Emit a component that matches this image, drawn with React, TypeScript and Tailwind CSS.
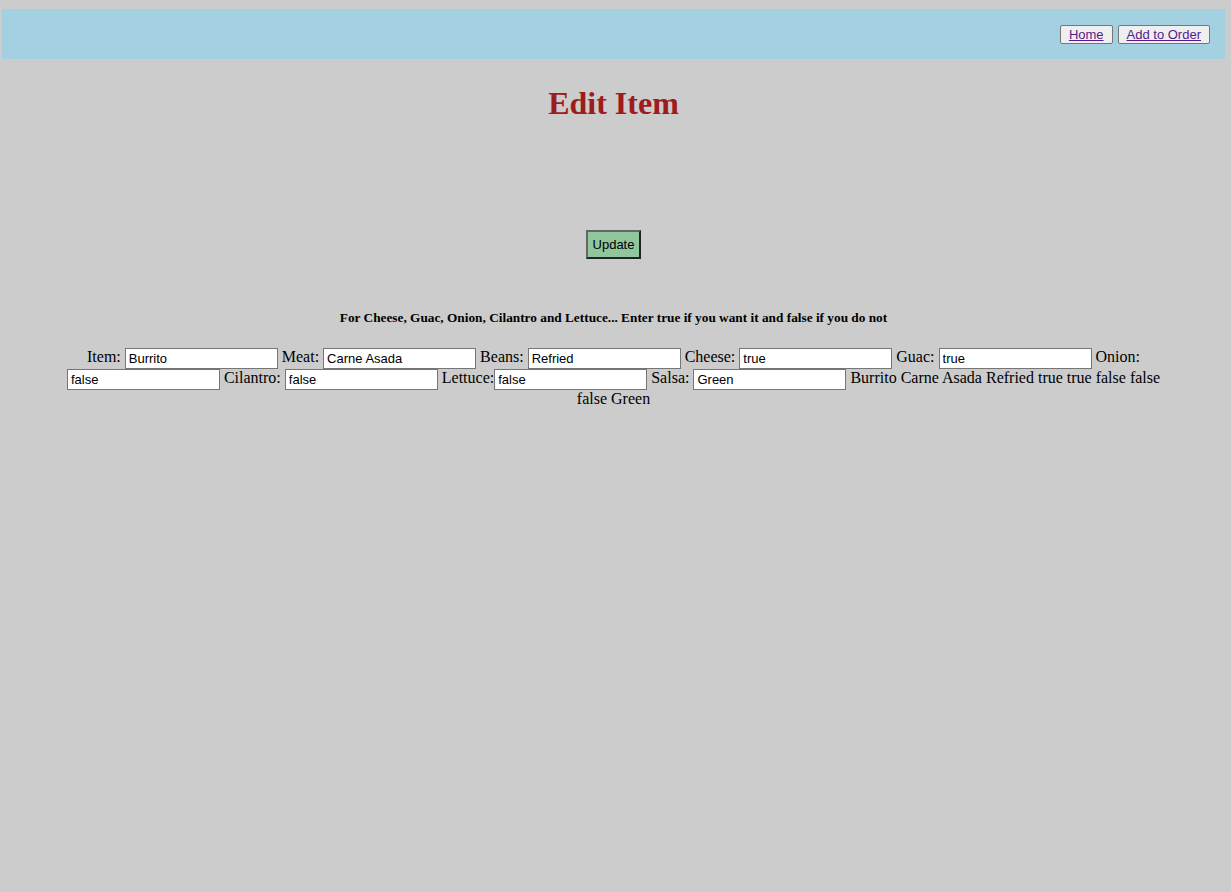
import React from "react";

const fields: { label: string; value: string; space?: boolean }[] = [
  { label: "Item:", value: "Burrito" },
  { label: "Meat:", value: "Carne Asada" },
  { label: "Beans:", value: "Refried" },
  { label: "Cheese:", value: "true" },
  { label: "Guac:", value: "true" },
  { label: "Onion:", value: "false" },
  { label: "Cilantro:", value: "false" },
  { label: "Lettuce:", value: "false", space: false },
  { label: "Salsa:", value: "Green" },
];

const NavButton = ({ children }: { children: React.ReactNode }) => (
  <button className="h-[19px] px-[8px] bg-[#efefef] border border-[#767676] rounded-[2px] text-[13px] leading-[15px] font-['Liberation_Sans',Arial,sans-serif]">
    <a href="#" className="text-[#551a8b] underline">
      {children}
    </a>
  </button>
);

export default function App() {
  return (
    <div className="min-h-[892px] bg-[#cccccc] pt-[9px] font-['Liberation_Serif','Times_New_Roman',serif] text-black">
      <div className="mx-[2px] mr-[6px] h-[50px] bg-[#a3d1e1] flex items-center justify-end gap-[5px] pr-[15px] pt-[1px]">
        <NavButton>Home</NavButton>
        <NavButton>Add to Order</NavButton>
      </div>

      <h1 className="mt-[26px] text-center text-[32px] leading-[37px] font-bold text-[#9e1c1e] pr-[4px]">
        Edit Item
      </h1>

      <div className="mt-[108px] flex justify-center pr-[4px]">
        <button className="h-[29px] px-[5px] bg-[#8fc69c] border-2 border-t-[#666] border-l-[#666] border-b-[#222] border-r-[#222] text-[13px] font-['Liberation_Sans',Arial,sans-serif]">
          Update
        </button>
      </div>

      <p className="mt-[51px] text-center text-[13.3px] leading-[15px] font-bold pr-[4px]">
        For Cheese, Guac, Onion, Cilantro and Lettuce... Enter true if you want it and false if you do not
      </p>

      <div className="mt-[22px] mx-auto w-[1108px] text-center text-[16px] leading-[20.5px] pr-[4px]">
        {fields.map((f) => (
          <React.Fragment key={f.label}>
            {f.label}
            {f.space === false ? "" : " "}
            <input
              readOnly
              value={f.value}
              className="w-[153px] h-[21px] -my-[1px] align-middle border border-[#767676] bg-white px-[3px] text-[13px] font-['Liberation_Sans',Arial,sans-serif] outline-none"
            />{" "}
          </React.Fragment>
        ))}
        Burrito Carne Asada Refried true true false false false Green
      </div>
    </div>
  );
}
